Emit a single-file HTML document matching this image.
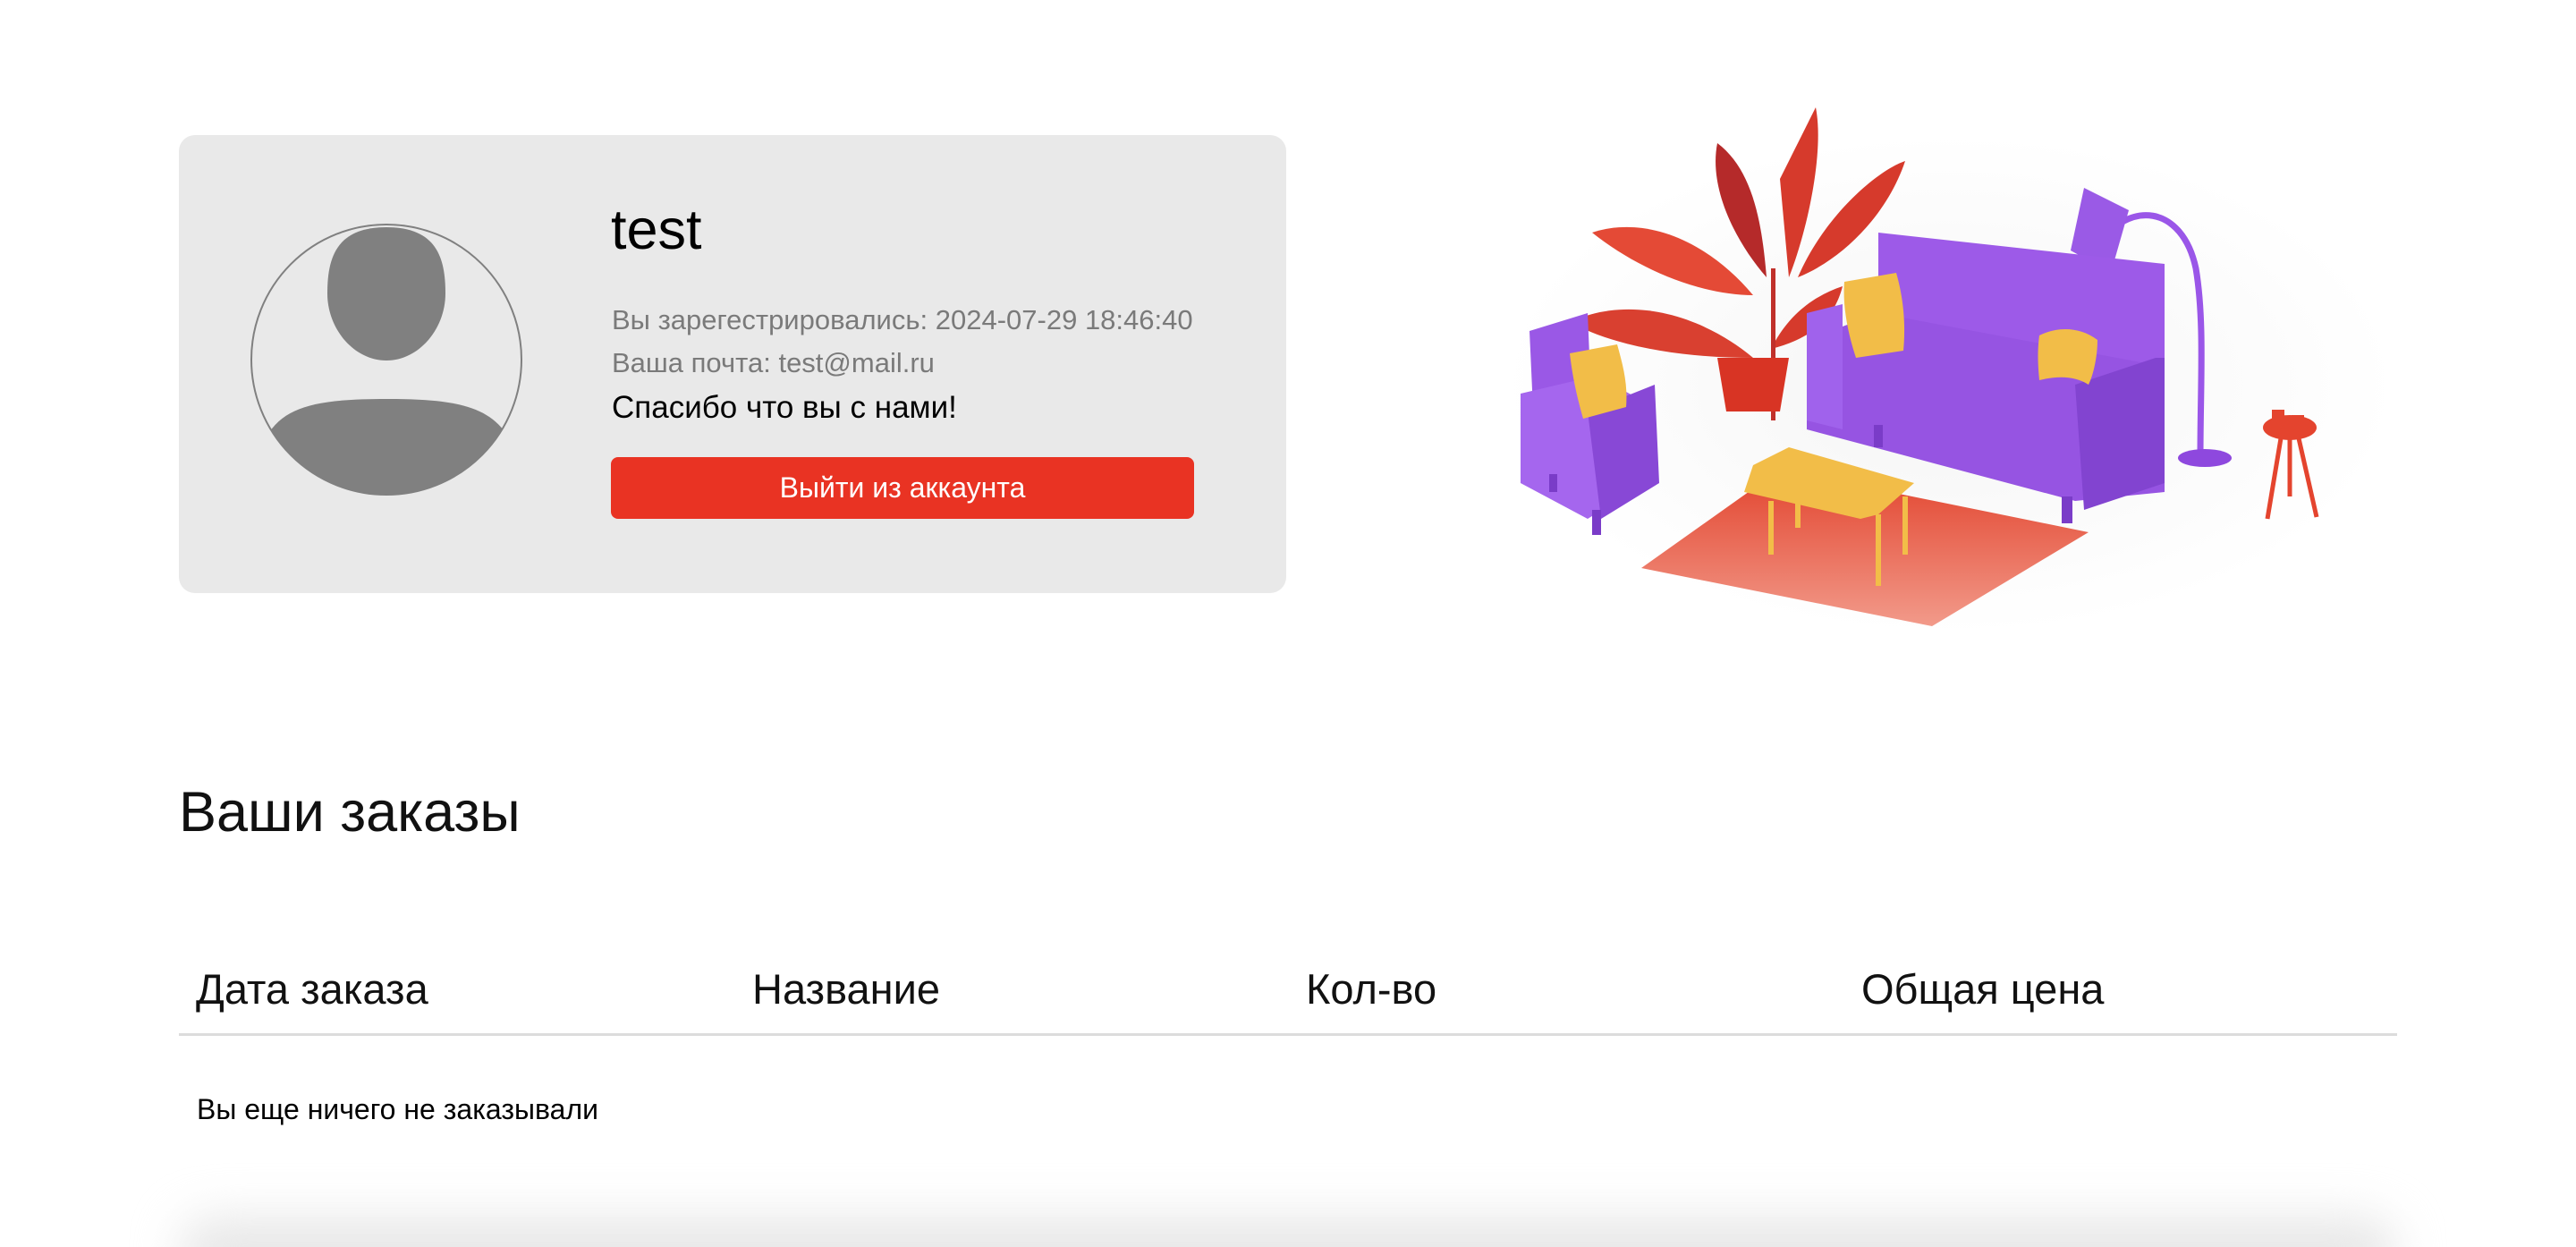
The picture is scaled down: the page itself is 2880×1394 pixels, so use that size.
<!DOCTYPE html>
<html><head><meta charset="utf-8"><style>
html,body{margin:0;padding:0;width:2880px;height:1394px;overflow:hidden;background:#fff;font-family:"Liberation Sans",sans-serif;position:relative}
.a{position:absolute;white-space:nowrap}
</style></head><body>
<div class="a" style="left:200px;top:151px;width:1238px;height:512px;background:#e9e9e9;border-radius:18px"></div>
<svg class="a" style="left:278px;top:248px" width="308" height="308" viewBox="0 0 308 308">
<defs><clipPath id="c"><circle cx="154" cy="154" r="151"/></clipPath></defs>
<g clip-path="url(#c)" fill="#808080">
<path d="M154 6 C210 6 220 40 220 80 C220 120 190 155 154 155 C118 155 88 120 88 80 C88 40 98 6 154 6Z"/>
<path d="M20 240 C40 205 80 198 154 198 C228 198 268 205 290 240 L300 320 L10 320Z"/>
</g>
<circle cx="154" cy="154" r="151" fill="none" stroke="#808080" stroke-width="2"/>
</svg>
<div class="a" style="left:683px;top:221px;font-size:63px;color:#000">test</div>
<div class="a" style="left:684px;top:340px;font-size:31px;color:#7a7a7a">Вы зарегестрировались: 2024-07-29 18:46:40</div>
<div class="a" style="left:684px;top:388px;font-size:31px;color:#7a7a7a">Ваша почта: test@mail.ru</div>
<div class="a" style="left:684px;top:436px;font-size:35px;color:#000">Спасибо что вы с нами!</div>
<div class="a" style="left:683px;top:511px;width:652px;height:69px;background:#e93323;border-radius:8px;color:#fff;font-size:32px;text-align:center;line-height:69px">Выйти из аккаунта</div>

<svg class="a" style="left:1680px;top:100px" width="1010" height="610" viewBox="0 0 1010 610">
<defs><linearGradient id="rug" x1="0" y1="0" x2="0" y2="1"><stop offset="0" stop-color="#e2442e"/><stop offset="1" stop-color="#f29a8a"/></linearGradient>
<radialGradient id="bg"><stop offset="0" stop-color="#eee"/><stop offset="1" stop-color="#fff"/></radialGradient></defs>
<ellipse cx="500" cy="330" rx="500" ry="280" fill="url(#bg)" opacity=".6"/>
<polygon points="155,535 310,425 655,495 480,600" fill="url(#rug)"/>
<g fill="#d63a2c"><path d="M310 100 C340 40 350 20 350 20 C360 70 340 160 320 210Z"/>
<path d="M240 60 C280 90 290 150 295 210 C260 170 230 110 240 60Z" fill="#b52a2a"/>
<path d="M330 210 C360 140 420 90 450 80 C430 140 380 190 330 210Z"/>
<path d="M100 160 C160 140 230 170 280 230 C220 230 150 200 100 160Z" fill="#e44a36"/>
<path d="M75 260 C140 230 220 250 280 300 C210 300 130 290 75 260Z" fill="#d94030"/>
<path d="M300 290 C320 250 350 230 380 220 C370 260 340 280 300 290Z"/>
<rect x="300" y="200" width="5" height="170" fill="#c0302a"/></g>
<path d="M240 300 L320 300 L310 360 L250 360Z" fill="#d83424"/>
<path d="M660 180 C700 120 760 130 775 200 C785 260 780 330 780 410" fill="none" stroke="#9a56e8" stroke-width="7"/>
<ellipse cx="785" cy="412" rx="30" ry="10" fill="#8e48de"/>
<polygon points="650,110 700,135 680,205 635,180" fill="#9a5ae6"/>
<ellipse cx="880" cy="378" rx="30" ry="14" fill="#e4442e"/>
<path d="M870 390 L855 480 M890 390 L910 478 M880 390 L880 455" stroke="#e4442e" stroke-width="5"/>
<rect x="860" y="358" width="14" height="18" fill="#e4442e"/><rect x="882" y="364" width="14" height="18" fill="#e4442e"/>
<polygon points="420,160 740,195 740,330 420,300" fill="#9d5ae8"/>
<polygon points="340,280 420,250 740,310 740,450 640,460 340,380" fill="#9654e2"/>
<polygon points="340,250 380,240 380,380 340,370" fill="#a062ec"/>
<polygon points="640,330 730,300 740,300 740,440 650,470" fill="#8244d0"/>
<rect x="415" y="375" width="10" height="25" fill="#7a3cc8"/><rect x="625" y="455" width="12" height="30" fill="#7a3cc8"/>
<path d="M382 215 L440 205 C450 240 450 270 448 292 L395 300 C385 270 380 240 382 215Z" fill="#f2bd48"/>
<path d="M600 275 C620 265 645 265 665 280 C665 300 660 320 655 330 C640 320 620 320 600 325 C598 305 598 290 600 275Z" fill="#f2bd48"/>
<polygon points="30,270 95,250 100,370 35,380" fill="#9a58e6"/>
<polygon points="20,340 105,320 160,350 160,440 95,480 20,440" fill="#a566ee"/>
<polygon points="95,360 170,330 175,440 110,480" fill="#8848d6"/>
<rect x="52" y="430" width="9" height="20" fill="#7a3cc8"/><rect x="100" y="470" width="10" height="28" fill="#7a3cc8"/>
<path d="M75 295 L128 285 C135 310 140 330 138 355 L90 368 C82 340 78 320 75 295Z" fill="#f2bd48"/>
<polygon points="280,420 320,400 460,440 420,475 400,480 270,450" fill="#f2bd48"/>
<path d="M300 460 L300 520 M420 475 L420 555 M450 455 L450 520 M330 455 L330 490" stroke="#f2bd48" stroke-width="6"/>
</svg>

<div class="a" style="left:200px;top:872px;font-size:63px;color:#111">Ваши заказы</div>
<div class="a" style="left:219px;top:1078px;font-size:47px;color:#111">Дата заказа</div>
<div class="a" style="left:841px;top:1078px;font-size:47px;color:#111">Название</div>
<div class="a" style="left:1460px;top:1078px;font-size:47px;color:#111">Кол-во</div>
<div class="a" style="left:2081px;top:1078px;font-size:47px;color:#111">Общая цена</div>
<div class="a" style="left:200px;top:1155px;width:2480px;height:3px;background:#dcdcdc"></div>
<div class="a" style="left:220px;top:1222px;font-size:32px;color:#000">Вы еще ничего не заказывали</div>
<div class="a" style="left:200px;top:1360px;width:2480px;height:80px;border-radius:40px;background:#e8e8e8;filter:blur(25px)"></div>
</body></html>
